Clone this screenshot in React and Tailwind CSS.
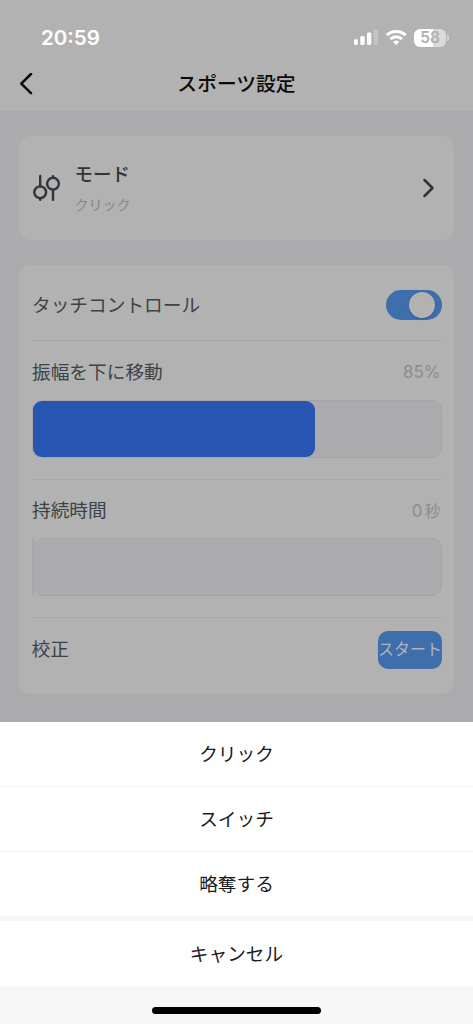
import { Switch } from '@headlessui/react';

const ACTIONS = ['クリック', 'スイッチ', '略奪する'];

const SLIDERS = [
  { key: 'amplitude', label: '振幅を下に移動', value: '85', unit: '%', fill: 282 },
  { key: 'duration', label: '持続時間', value: '0', unit: '秒', fill: 0 },
];

function StatusBar() {
  return (
    <div className="flex h-[56px] items-end justify-between pl-[41px] pr-[24px]">
      <span className="mb-[4px] font-['Inter'] text-[20.5px] leading-7 font-semibold text-white">20:59</span>
      <div className="mb-[9px] flex items-center text-white">
        <svg width="26" height="18" viewBox="0 0 26 18" fill="currentColor">
          <rect x="-0.5" y="10.2" width="4.3" height="5.8" rx="1.3" />
          <rect x="6.3" y="7" width="4.3" height="9" rx="1.3" />
          <rect x="13" y="3.6" width="4.3" height="12.4" rx="1.3" />
          <rect x="19.7" y="0.4" width="4.3" height="15.6" rx="1.3" opacity="0.25" />
        </svg>
        <svg className="ml-[6px]" width="23" height="18" viewBox="0 0 23 18" fill="none" stroke="currentColor" strokeWidth="3.1">
          <path d="M0.8 6.2a13.6 13.6 0 0 1 18.8 0" />
          <path d="M4.5 10.1a8.1 8.1 0 0 1 11.4 0" />
          <path d="M10.2 16 7.2 13a4.3 4.3 0 0 1 6 0z" fill="currentColor" stroke="none" />
        </svg>
        <div className="ml-[5px] flex h-[18px] w-8 items-center justify-center rounded-[6px] bg-linear-to-r from-white from-58% to-[#dadada] to-58% font-['Inter'] text-[15.5px] leading-none font-semibold text-[#b0b0b0]">
          58
        </div>
        <div className="ml-px h-[6px] w-[2px] rounded-r-full bg-[#d5d5d5]" />
      </div>
    </div>
  );
}

function ModeCard() {
  return (
    <section className="flex h-[104px] items-center rounded-xl bg-[#b2b2b2] pl-[14px] pr-[19px]">
      <svg width="28" height="28" viewBox="0 0 28 28" fill="none" stroke="#30353a" strokeWidth="2.4" strokeLinecap="round">
        <circle cx="7.2" cy="18.3" r="5.9" />
        <path d="M7.2 2v10.2M7.2 24.4v1.4" />
        <circle cx="20" cy="9.7" r="5.9" />
        <path d="M20 15.6v10.2M20 3.6V2.2" />
      </svg>
      <div className="ml-[13.5px] flex-1">
        <h2 className="text-[18.5px] leading-7 font-medium text-[#30353a]">モード</h2>
        <p className="mt-[6px] text-[14px] leading-5 text-[#85878a]">クリック</p>
      </div>
      <svg width="12" height="20" viewBox="0 0 12 20" fill="none" stroke="#30353a" strokeWidth="2.5" strokeLinecap="round" strokeLinejoin="round">
        <path d="m1.5 2 8 8-8 8" />
      </svg>
    </section>
  );
}

function SliderRow({ label, value, unit, fill }) {
  return (
    <div className="h-[138.5px] border-t border-[#a8a8aa] pt-[18px]">
      <div className="flex h-[28px] items-center justify-between pr-px pl-[0.5px]">
        <span>{label}</span>
        <span className="flex items-center text-[#8b8d90]">
          <span className="font-['Inter'] text-[17px]">{value}</span>
          {unit === '%' ? (
            <span className="font-['Inter'] text-[17px]">%</span>
          ) : (
            <span className="ml-[2px] text-[16px]">{unit}</span>
          )}
        </span>
      </div>
      {fill > 0 ? (
        <div className="mt-[12.5px] h-[58px] rounded-[10px] border border-[#a5a6a9] bg-[#ababad]">
          <div className="h-full rounded-[9px] bg-[#2854b2]" style={{ width: fill }} />
        </div>
      ) : (
        <div className="mt-[12.5px] flex h-[58px]">
          <div className="w-[2px] bg-[#a6a7a9]" />
          <div className="-ml-px flex-1 rounded-[10px] border border-[#a5a6a9] bg-[#ababad]" />
        </div>
      )}
    </div>
  );
}

function ControlCard() {
  return (
    <section className="mt-[25px] h-[429px] rounded-xl bg-[#b2b2b2] px-[12.5px] text-[18.7px] text-[#3d4246]">
      <div className="flex h-[75px] items-center justify-between pt-[5px]">
        <span className="pt-[2px] pl-[0.5px]">タッチコントロール</span>
        <Switch
          checked
          onChange={() => {}}
          className="flex h-[30px] w-[56px] items-center justify-end rounded-full bg-[#3e6eab] pr-[7px]"
        >
          <span className="size-[26px] rounded-full bg-[#b2b2b2] shadow-sm" />
        </Switch>
      </div>
      {SLIDERS.map((slider) => (
        <SliderRow key={slider.key} label={slider.label} value={slider.value} unit={slider.unit} fill={slider.fill} />
      ))}
      <div className="flex h-[65px] items-center justify-between border-t border-[#a8a8aa]">
        <span className="pt-px">校正</span>
        <button className="h-[38px] w-[63.5px] overflow-hidden rounded-[10px] bg-[#3e6eab] text-[16px] whitespace-nowrap text-[#adb4bd]">
          スタート
        </button>
      </div>
    </section>
  );
}

function ActionSheet() {
  return (
    <div className="h-[302px] bg-[#f7f7f7] text-[18.7px] text-[#1c1c1e]">
      {ACTIONS.map((action) => (
        <button
          key={action}
          className="block h-[65px] w-full border-b border-[#f3f3f3] bg-white pt-[2px] nth-3:h-[64px] nth-3:border-b-0"
        >
          {action}
        </button>
      ))}
      <button className="mt-[5px] block h-[65px] w-full bg-white pt-[3px]">キャンセル</button>
      <div className="mx-auto mt-[21px] h-[7px] w-[169px] rounded-full bg-black" />
    </div>
  );
}

export default function App() {
  return (
    <div
      lang="ja"
      className="flex h-[1024px] w-[473px] flex-col overflow-hidden bg-[#ababad] font-['Liberation_Sans','Noto_Sans_CJK_JP',sans-serif]"
    >
      <header className="h-[111px] bg-[#b2b2b2]">
        <StatusBar />
        <div className="grid h-[55px] grid-cols-[40px_1fr_40px] items-center">
          <svg className="ml-[19px]" width="14" height="22" viewBox="0 0 14 22" fill="none" stroke="#0a0a0a" strokeWidth="2.5" strokeLinecap="round" strokeLinejoin="round">
            <path d="M12 1 2.3 10.6l9.7 9.5" />
          </svg>
          <h1 className="pt-[3px] text-center text-[19.8px] font-medium text-[#0a0a0a]">スポーツ設定</h1>
        </div>
      </header>
      <main className="flex-1 px-[19px] pt-[25px]">
        <ModeCard />
        <ControlCard />
      </main>
      <ActionSheet />
    </div>
  );
}
